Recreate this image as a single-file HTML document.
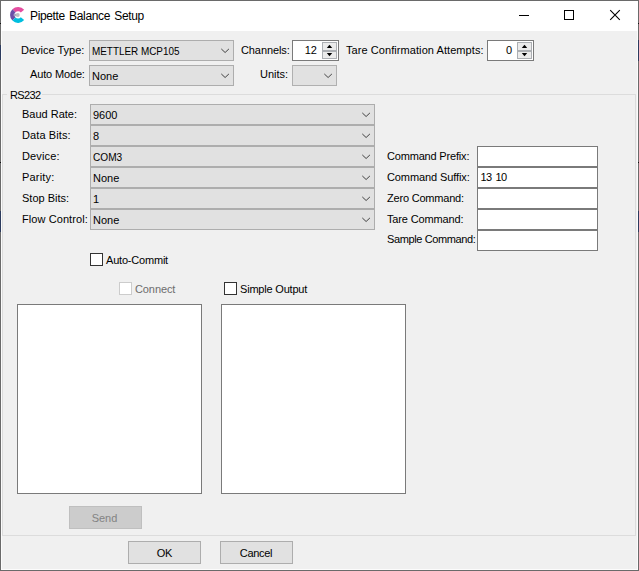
<!DOCTYPE html>
<html><head><meta charset="utf-8"><title>Pipette Balance Setup</title>
<style>
*{box-sizing:border-box;margin:0;padding:0}
html,body{width:639px;height:571px;overflow:hidden;background:#f0f0f0}
body{position:relative;font-family:"Liberation Sans","DejaVu Sans",sans-serif;font-size:11px;color:#000;line-height:13px}
.abs,.l,.cb,.tf,.sp,.ta,.btn,.chk{position:absolute}
.win{position:absolute;left:0;top:0;width:639px;height:571px;border:1px solid #6a6a6a;}
.win2{position:absolute;left:1px;top:31px;width:637px;height:539px;border:1px solid #fcfcfc;border-top:none}
.tb{position:absolute;left:1px;top:1px;width:637px;height:30px;background:#fff}
.title{position:absolute;left:30px;top:9px;font-size:12px;line-height:15px;white-space:nowrap;letter-spacing:-0.36px;word-spacing:1.3px}
.l{white-space:nowrap;height:13px;line-height:13px}
.cb{background:#e1e1e1;border:1px solid #adadad;height:21px}
.cb span{position:absolute;left:2px;top:4px;transform-origin:0 0;line-height:13px;white-space:nowrap}
.cb svg{position:absolute;right:3px;top:7px}
.tf{background:#fff;border:1px solid #7a7a7a;height:21px;width:121px;left:477px}
.tf span{position:absolute;left:3px;top:3px;white-space:nowrap}
.sp{background:#fff;border:1px solid #7a7a7a;height:21px;width:47px}
.sp .v{position:absolute;right:21px;top:3px}
.sp .u,.sp .d{position:absolute;left:29px;width:15px;background:#ebebeb;border:1px solid #acafb3}
.sp .u{top:1px;height:9px}
.sp svg{position:absolute;left:0;top:0}
.sp .d{top:10px;height:8px}
.ta{background:#fff;border:1px solid #7a7a7a;width:185px;height:190px;top:304px}
.btn{background:#e1e1e1;border:1px solid #adadad;height:23px;width:73px;text-align:center;line-height:23px;letter-spacing:-0.3px}
.chk{width:13px;height:13px;background:#fff;border:1px solid #333}
.grp{position:absolute;left:2px;top:94px;width:634px;height:442px;border:1px solid #dcdcdc}
.dis{color:#6d6d6d}
</style></head><body>
<div class="tb"></div>
<svg class="abs" style="left:6px;top:4px" width="22" height="22" viewBox="6 4 22 22">
<g fill="none" stroke-width="4.400">
<path d="M22.49 11.170 A5.800 5.800 0 0 0 13.95 10.800" stroke="#e54d9f"/>
<path d="M13.95 10.800 A5.800 5.800 0 0 0 13.95 19.000" stroke="#6b4fa8"/>
<path d="M13.95 19.000 A5.800 5.800 0 0 0 22.49 18.630" stroke="#00bfdf"/>
</g>
<ellipse cx="16.000" cy="15" rx="2.700" ry="1.200" fill="#aaa6c0"/>
<circle cx="17.800" cy="15" r="1.900" fill="#bcbcc2"/>
</svg>
<div class="title">Pipette Balance Setup</div>
<svg class="abs" style="left:515px;top:5px" width="120" height="22" viewBox="515 5 120 22">
<path d="M519 15.500H529" stroke="#000" stroke-width="1" fill="none"/>
<rect x="564.500" y="10.500" width="9" height="9" stroke="#000" stroke-width="1" fill="none"/>
<path d="M610.200 10.200L619.800 19.800M619.800 10.200L610.200 19.800" stroke="#000" stroke-width="1.100" fill="none"/>
</svg>

<div class="grp"></div>
<div class="l" style="left:7px;top:89px;background:#f0f0f0;padding:0 1px 0 3px;letter-spacing:-0.6px">RS232</div>

<div class="l" style="left:21px;top:44px">Device Type:</div>
<div class="cb" style="left:89px;top:40px;width:145px"><span style="transform:scaleX(0.9)">METTLER MCP105</span><svg width="10" height="6" viewBox="0 0 10 6"><path d="M1.300 0.950L5.100 4.500L8.900 0.950" fill="none" stroke="#404040" stroke-width="1"/></svg></div>
<div class="l" style="left:241px;top:44px;letter-spacing:-0.1px">Channels:</div>
<div class="sp" style="left:292px;top:40px"><span class="v">12</span><div class="u"><svg width="13" height="7" viewBox="0 0 13 7"><polygon points="3.8,5 9.2,5 6.5,1.8" fill="#000"/></svg></div><div class="d"><svg width="13" height="6" viewBox="0 0 13 6"><polygon points="3.8,1 9.2,1 6.5,4.200" fill="#000"/></svg></div></div>
<div class="l" style="left:346px;top:44px;letter-spacing:0.07px">Tare Confirmation Attempts:</div>
<div class="sp" style="left:487px;top:40px"><span class="v">0</span><div class="u"><svg width="13" height="7" viewBox="0 0 13 7"><polygon points="3.8,5 9.2,5 6.5,1.8" fill="#000"/></svg></div><div class="d"><svg width="13" height="6" viewBox="0 0 13 6"><polygon points="3.8,1 9.2,1 6.5,4.200" fill="#000"/></svg></div></div>

<div class="l" style="left:30px;top:68px;letter-spacing:-0.15px">Auto Mode:</div>
<div class="cb" style="left:89px;top:65px;width:145px"><span>None</span><svg width="10" height="6" viewBox="0 0 10 6"><path d="M1.300 0.950L5.100 4.500L8.900 0.950" fill="none" stroke="#404040" stroke-width="1"/></svg></div>
<div class="l" style="left:260px;top:68px">Units:</div>
<div class="cb" style="left:292px;top:65px;width:45px;border-color:#b0b0b0"><svg width="10" height="6" viewBox="0 0 10 6"><path d="M1.300 0.950L5.100 4.500L8.900 0.950" fill="none" stroke="#454545" stroke-width="1"/></svg></div>

<div class="l" style="left:22px;top:108px">Baud Rate:</div>
<div class="l" style="left:22px;top:129px;letter-spacing:0.1px">Data Bits:</div>
<div class="l" style="left:22px;top:150px;letter-spacing:0.15px">Device:</div>
<div class="l" style="left:22px;top:171px;letter-spacing:0.2px">Parity:</div>
<div class="l" style="left:22px;top:192px">Stop Bits:</div>
<div class="l" style="left:22px;top:213px;letter-spacing:0.08px">Flow Control:</div>
<div class="cb" style="left:90px;top:104px;width:285px"><span>9600</span><svg width="10" height="6" viewBox="0 0 10 6"><path d="M1.300 0.950L5.100 4.500L8.900 0.950" fill="none" stroke="#404040" stroke-width="1"/></svg></div>
<div class="cb" style="left:90px;top:125px;width:285px"><span>8</span><svg width="10" height="6" viewBox="0 0 10 6"><path d="M1.300 0.950L5.100 4.500L8.900 0.950" fill="none" stroke="#404040" stroke-width="1"/></svg></div>
<div class="cb" style="left:90px;top:146px;width:285px"><span style="transform:scaleX(0.92)">COM3</span><svg width="10" height="6" viewBox="0 0 10 6"><path d="M1.300 0.950L5.100 4.500L8.900 0.950" fill="none" stroke="#404040" stroke-width="1"/></svg></div>
<div class="cb" style="left:90px;top:167px;width:285px"><span>None</span><svg width="10" height="6" viewBox="0 0 10 6"><path d="M1.300 0.950L5.100 4.500L8.900 0.950" fill="none" stroke="#404040" stroke-width="1"/></svg></div>
<div class="cb" style="left:90px;top:188px;width:285px"><span>1</span><svg width="10" height="6" viewBox="0 0 10 6"><path d="M1.300 0.950L5.100 4.500L8.900 0.950" fill="none" stroke="#404040" stroke-width="1"/></svg></div>
<div class="cb" style="left:90px;top:209px;width:285px"><span>None</span><svg width="10" height="6" viewBox="0 0 10 6"><path d="M1.300 0.950L5.100 4.500L8.900 0.950" fill="none" stroke="#404040" stroke-width="1"/></svg></div>

<div class="l" style="left:387px;top:150px;letter-spacing:-0.18px">Command Prefix:</div>
<div class="l" style="left:387px;top:171px;letter-spacing:-0.1px">Command Suffix:</div>
<div class="l" style="left:387px;top:192px;letter-spacing:-0.2px">Zero Command:</div>
<div class="l" style="left:387px;top:213px;letter-spacing:-0.15px">Tare Command:</div>
<div class="l" style="left:387px;top:233px;letter-spacing:-0.38px;z-index:3">Sample Command:</div>
<div class="tf" style="top:146px"></div>
<div class="tf" style="top:167px"><span style="letter-spacing:-0.5px;word-spacing:1.2px;left:2.5px">13 10</span></div>
<div class="tf" style="top:188px"></div>
<div class="tf" style="top:209px"></div>
<div class="tf" style="top:230px"></div>

<div class="chk" style="left:90px;top:253px"></div>
<div class="l" style="left:106px;top:254px;letter-spacing:-0.2px">Auto-Commit</div>
<div class="chk" style="left:119px;top:282px;border-color:#ccc"></div>
<div class="l dis" style="left:135px;top:283px;letter-spacing:-0.1px">Connect</div>
<div class="chk" style="left:224px;top:282px"></div>
<div class="l" style="left:240px;top:283px;letter-spacing:-0.2px">Simple Output</div>

<div class="ta" style="left:17px"></div>
<div class="ta" style="left:221px"></div>

<div class="btn dis" style="left:69px;top:506px;background:#ccc;border-color:#bfbfbf;letter-spacing:0;text-indent:-2px;color:#838383">Send</div>
<div class="btn" style="left:128px;top:541px">OK</div>
<div class="btn" style="left:220px;top:541px;text-indent:-1px">Cancel</div>
<div class="win2"></div><div class="win"></div>
<div class="abs" style="left:0;top:45px;width:1px;height:15px;background:#2c3b5e"></div>
<div class="abs" style="left:0;top:211px;width:1px;height:21px;background:#2c3b5e"></div>
<div class="abs" style="left:638px;top:40px;width:1px;height:21px;background:#2c3b5e"></div>
<div class="abs" style="left:638px;top:211px;width:1px;height:21px;background:#2c3b5e"></div>
<div class="abs" style="left:0;top:23px;width:1px;height:1px;background:#111"></div>
<div class="abs" style="left:638px;top:23px;width:1px;height:1px;background:#111"></div>
<div class="abs" style="left:0;top:162px;width:1px;height:1px;background:#111"></div>
<div class="abs" style="left:638px;top:162px;width:1px;height:1px;background:#111"></div>
</body></html>
